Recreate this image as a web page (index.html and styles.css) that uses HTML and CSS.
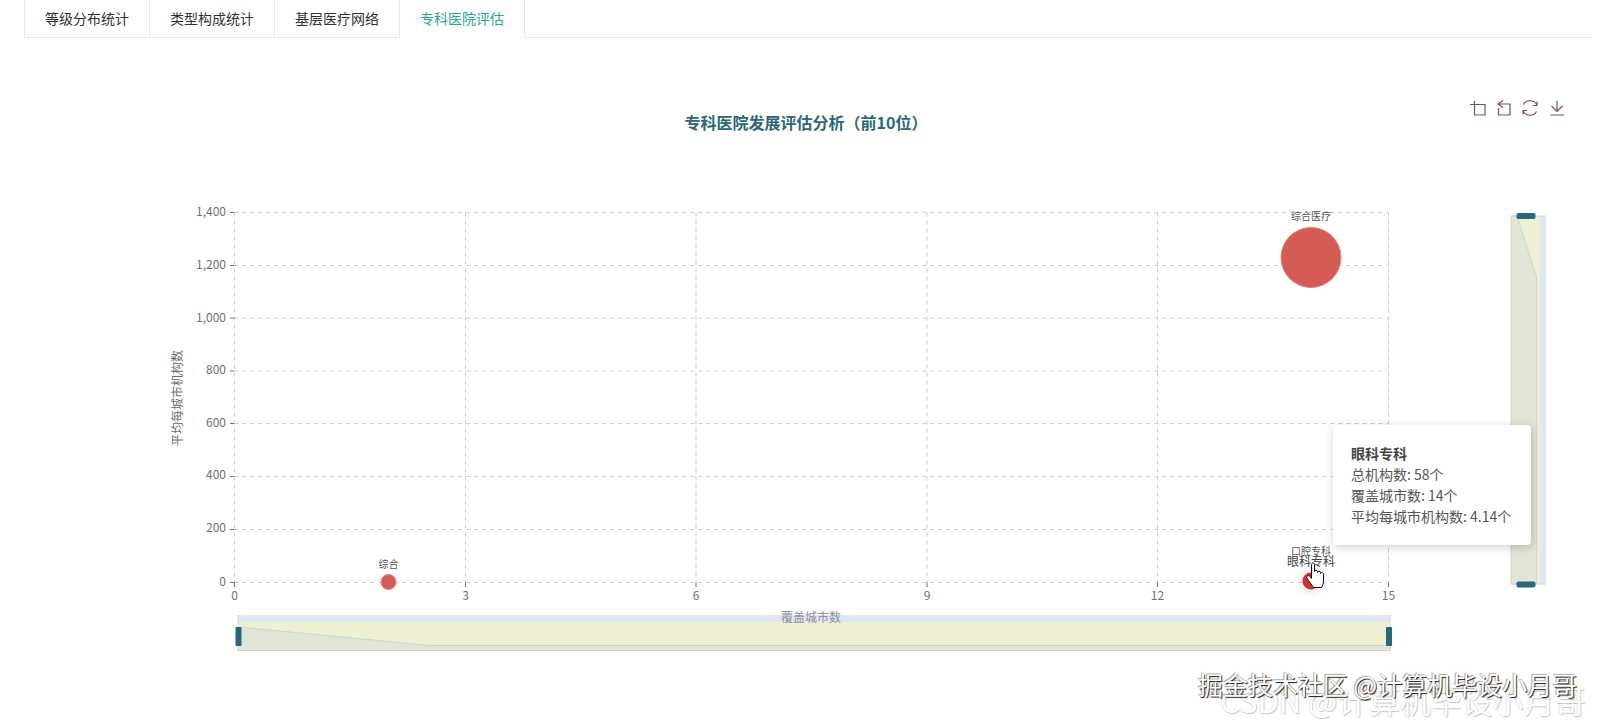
FILE: index.html
```html
<!DOCTYPE html>
<html lang="zh-CN">
<head>
    <meta charset="UTF-8">
    <title>专科医院评估</title>
    <link rel="stylesheet" href="styles.css">
</head>
<body>
    <div class="tabs">
        <div class="tab">等级分布统计</div>
        <div class="tab">类型构成统计</div>
        <div class="tab">基层医疗网络</div>
        <div class="tab tab-active">专科医院评估</div>
    </div>
    <div class="chart">
        <svg class="chart-svg" viewBox="0 38 1603 682" width="1603" height="682">
            <text class="title" x="806" y="129" text-anchor="middle">专科医院发展评估分析（前10位）</text>

            <!-- toolbox -->
            <g class="tool-icon">
                <path d="M1470 104.500H1485V115H1474.500V101"/>
                <path d="M1503 100.500L1498 104L1503 107.500M1498 104H1510V115H1498.500V108"/>
                <path d="M1523.500 104.500A7.500 7.500 0 0 1 1537 105.500M1537 101.500V105.500H1533M1536.500 111.500A7.500 7.500 0 0 1 1523 110.500M1523 114.500V110.500H1527"/>
                <path d="M1557 101V111.500M1551.500 106L1557 111.500L1562.500 106M1550.500 115H1564"/>
            </g>

            <!-- grid -->
            <g class="grid">
                <path d="M234.500 212.500H1388.500M234.500 265.500H1388.500M234.500 318H1388.500M234.500 371H1388.500M234.500 423.500H1388.500M234.500 476.500H1388.500M234.500 529.500H1388.500M234.500 582.500H1388.500"/>
                <path d="M234.500 212.500V582.500M465.500 212.500V582.500M696 212.500V582.500M927 212.500V582.500M1157.500 212.500V582.500M1388.500 212.500V582.500"/>
            </g>
            <path class="tick" d="M230 212.500H234M230 265.500H234M230 318H234M230 371H234M230 423.500H234M230 476.500H234M230 529.500H234M230 582.500H234M234.500 582.500V587M465.500 582.500V587M696 582.500V587M927 582.500V587M1157.500 582.500V587M1388.500 582.500V587"/>

            <!-- axis labels -->
            <g class="axis-label" text-anchor="end">
                <text x="226" y="216">1,400</text>
                <text x="226" y="269">1,200</text>
                <text x="226" y="322">1,000</text>
                <text x="226" y="374">800</text>
                <text x="226" y="427">600</text>
                <text x="226" y="479">400</text>
                <text x="226" y="532">200</text>
                <text x="226" y="586">0</text>
            </g>
            <g class="axis-label" text-anchor="middle">
                <text x="234.500" y="600">0</text>
                <text x="465.500" y="600">3</text>
                <text x="696" y="600">6</text>
                <text x="927" y="600">9</text>
                <text x="1157.500" y="600">12</text>
                <text x="1388.500" y="600">15</text>
            </g>
            <text class="axis-label" transform="translate(182 398) rotate(-90)" text-anchor="middle">平均每城市机构数</text>

            <!-- horizontal zoom slider -->
            <rect class="zoom-blue" x="238" y="615" width="1152" height="7"/>
            <rect class="zoom-yellow" x="238" y="622" width="1152" height="28"/>
            <path class="zoom-area" d="M238 627L430 645.500H1390V650.500H238Z"/>
            <path class="zoom-edge" d="M238 615V651M1390 615V651"/>
            <rect class="zoom-handle" x="235.500" y="627" width="6" height="19" rx="1"/>
            <rect class="zoom-handle" x="1386" y="627" width="6" height="19" rx="1"/>
            <text class="axis-name" x="811" y="622" text-anchor="middle">覆盖城市数</text>

            <!-- vertical zoom slider -->
            <rect class="zoom-blue" x="1539" y="216" width="7" height="368"/>
            <rect class="zoom-yellow" x="1511" y="216" width="29" height="368"/>
            <path class="zoom-area" d="M1511 216H1517L1536.500 277V584H1511Z"/>
            <path class="zoom-edge" d="M1511 216H1546M1511 584H1546"/>
            <rect class="zoom-handle" x="1516.500" y="213" width="19" height="6" rx="2"/>
            <rect class="zoom-handle" x="1516.500" y="581.500" width="19" height="6" rx="2"/>

            <!-- bubbles -->
            <circle class="bubble" cx="1311" cy="257.500" r="30"/>
            <circle class="bubble" cx="388.500" cy="582" r="7.500"/>
            <circle class="bubble-hover" cx="1311" cy="581" r="8.500"/>
            <text class="bubble-label" x="1311" y="220" text-anchor="middle">综合医疗</text>
            <text class="bubble-label" x="388.500" y="567.500" text-anchor="middle">综合</text>
            <text class="bubble-label" x="1311" y="554.500" text-anchor="middle">口腔专科</text>
            <text class="bubble-label-hover" x="1311" y="566" text-anchor="middle">眼科专科</text>

            <!-- hand cursor -->
            <path class="cursor" d="M1311.500 564.500C1311.500 562.500 1314.500 562.500 1314.500 564.500V571.500C1314.500 569.800 1317.500 569.800 1317.500 571.500V572.500C1317.500 570.800 1320.500 570.800 1320.500 572.500V573.500C1320.500 572 1323.500 572 1323.500 574V581C1323.500 584 1322.500 585.500 1321.500 587.500H1313.500C1312 585 1308.500 581 1307 578C1306 576 1308.500 574.800 1310 576.500L1311.500 578.500Z"/>
        </svg>

        <div class="tooltip">
            <div class="tooltip-title">眼科专科</div>
            <div>总机构数: 58个</div>
            <div>覆盖城市数: 14个</div>
            <div>平均每城市机构数: 4.14个</div>
        </div>

        <div class="watermark watermark-back">CSDN @计算机毕设小月哥</div>
        <div class="watermark watermark-front">掘金技术社区 @计算机毕设小月哥</div>
    </div>
</body>
</html>
```

FILE: styles.css
```css
/* Basic page styling */
html, body {
    margin: 0;
    height: 720px;
    overflow: hidden;
    background-color: #fff;
    font-family: "Noto Sans CJK SC", "Noto Sans", sans-serif;
}

/* Tabs */
.tabs {
    display: flex;
    height: 37px;
    margin: 0 11px 0 24px;
    border-bottom: 1px solid #e4e7ed;
}
.tab {
    width: 125px;
    box-sizing: border-box;
    border-left: 1px solid #e4e7ed;
    font-size: 14px;
    line-height: 37px;
    text-align: center;
    color: #303133;
}
.tab-active {
    height: 38px;
    background-color: #fff;
    border-right: 1px solid #e4e7ed;
    width: 126px;
    color: #2aa78e;
}

/* Chart */
.chart {
    position: relative;
    height: 682px;
}
.chart-svg {
    display: block;
}
.title {
    font-size: 16px;
    font-weight: bold;
    fill: #2c6874;
}
.tool-icon path {
    fill: none;
    stroke: #7c4f55;
    stroke-width: 1.2;
}
.grid path {
    fill: none;
    stroke: #ccc;
    stroke-width: 1;
    stroke-dasharray: 4 4;
}
.tick {
    fill: none;
    stroke: #6e7079;
    stroke-width: 1;
}
.axis-label {
    font-size: 12px;
    fill: #707070;
}
.axis-name {
    font-size: 12px;
    fill: #8c8f96;
}
.zoom-blue {
    fill: #dfe7f3;
}
.zoom-yellow {
    fill: #eff0d3;
}
.zoom-area {
    fill: #e1e5d6;
    stroke: #cbd6ce;
    stroke-width: 1;
}
.zoom-edge {
    fill: none;
    stroke: #d0d6d6;
    stroke-width: 1;
}
.zoom-handle {
    fill: #26687a;
}
.bubble {
    fill: #d55b55;
    stroke: #e0847f;
    stroke-width: 1;
}
.bubble-hover {
    fill: #d3302f;
    filter: drop-shadow(0 0 5px rgba(0, 0, 0, 0.25));
}
.bubble-label {
    font-size: 10px;
    fill: #555;
}
.bubble-label-hover {
    font-size: 12px;
    fill: #444;
}
.cursor {
    fill: #fff;
    stroke: #111;
    stroke-width: 1;
}

/* Tooltip */
.tooltip {
    position: absolute;
    left: 1333px;
    top: 387px;
    width: 198px;
    box-sizing: border-box;
    padding: 18px;
    background-color: #fff;
    border-radius: 4px;
    box-shadow: 1px 2px 10px rgba(0, 0, 0, 0.2);
    font-size: 14px;
    line-height: 21px;
    color: #555;
    white-space: nowrap;
}
.tooltip-title {
    font-weight: bold;
    color: #444;
}

/* Watermarks */
.watermark {
    position: absolute;
    line-height: 30px;
    white-space: nowrap;
}
.watermark-back {
    left: 1220px;
    top: 647px;
    font-size: 31px;
    color: #fff;
    text-shadow: 1px 1px 1px rgba(0, 0, 0, 0.22), -1px 0 1px rgba(0, 0, 0, 0.1);
}
.watermark-front {
    left: 1198px;
    top: 631px;
    font-size: 25px;
    color: #fff;
    text-shadow: 1px 1px 1px rgba(0, 0, 0, 0.9), -1px -1px 1px rgba(0, 0, 0, 0.35);
}
```
